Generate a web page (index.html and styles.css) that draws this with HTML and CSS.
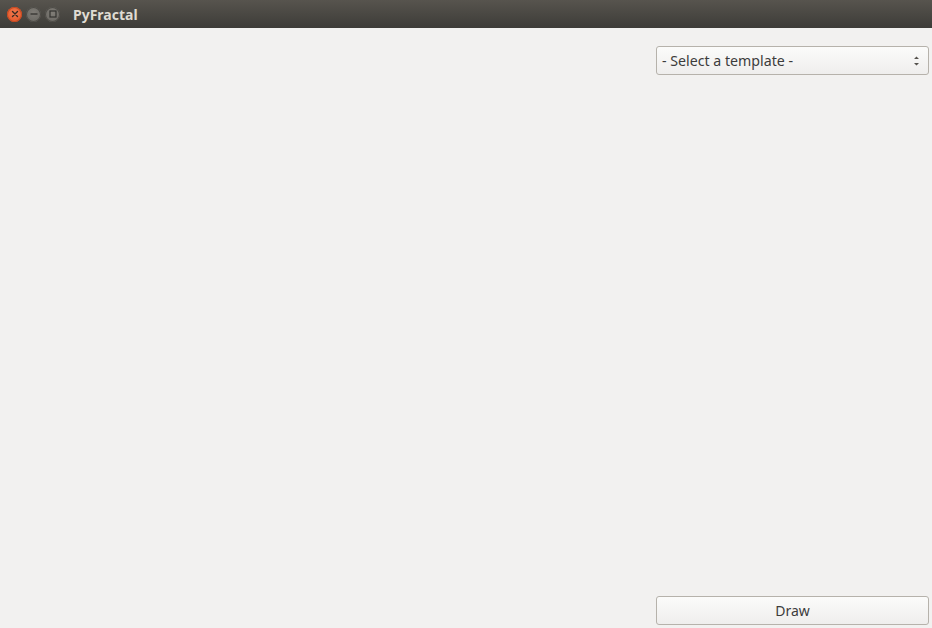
FILE: index.html
```html
<!DOCTYPE html>
<html>
<head>
<meta charset="utf-8">
<link rel="stylesheet" href="styles.css">
</head>
<body>
<div class="window">
  <div class="titlebar">
    <div class="controls">
      <span class="wbtn close">
        <svg width="8" height="8" viewBox="0 0 8 8"><path d="M1.5 1.5 L6.5 6.5 M6.5 1.5 L1.5 6.5" stroke="#3a2a22" stroke-width="1.4" stroke-linecap="round"/></svg>
      </span>
      <span class="wbtn">
        <svg width="8" height="8" viewBox="0 0 8 8"><path d="M0.5 4 H7.5" stroke="#33322f" stroke-width="1.3"/></svg>
      </span>
      <span class="wbtn">
        <svg width="8" height="8" viewBox="0 0 8 8"><rect x="1" y="1" width="6" height="6" fill="none" stroke="#33322f" stroke-width="1.2"/></svg>
      </span>
    </div>
    <div class="title">PyFractal</div>
  </div>
  <div class="content">
    <div class="canvas"></div>
    <div class="side">
      <div class="combo">
        <span class="combo-text">- Select a template -</span>
        <svg class="arrows" width="7" height="14" viewBox="0 0 7 14"><path d="M1 5 L3.5 2.5 L6 5 Z M1 9 L3.5 11.5 L6 9 Z" fill="#55524d"/></svg>
      </div>
      <div class="spacer"></div>
      <button class="btn">Draw</button>
    </div>
  </div>
</div>
</body>
</html>
```

FILE: styles.css
```css
html, body {
  margin: 0;
  padding: 0;
  background: #f2f1f0;
  font-family: "Noto Sans", "DejaVu Sans", sans-serif;
}
.window {
  width: 932px;
  height: 628px;
  display: flex;
  flex-direction: column;
}
.titlebar {
  height: 28px;
  flex: none;
  background: linear-gradient(#57544e, #3d3c38);
  display: flex;
  align-items: center;
}
.controls {
  display: flex;
  gap: 4px;
  padding-left: 7px;
}
.wbtn {
  flex: none;
  width: 15px;
  height: 15px;
  border-radius: 50%;
  background: radial-gradient(circle at 50% 40%, #807d77, #64625d);
  box-shadow: inset 0 0 0 1px #4d4b46;
  display: flex;
  align-items: center;
  justify-content: center;
}
.wbtn.close {
  background: radial-gradient(circle at 50% 40%, #f47a4e, #df4f22);
  box-shadow: inset 0 0 0 1px #c44a22;
}
.title {
  margin-left: 13px;
  color: #dfdbd2;
  font-weight: bold;
  font-size: 14px;
}
.content {
  flex: 1;
  display: flex;
}
.canvas {
  flex: 1;
}
.side {
  width: 273px;
  margin-right: 3px;
  padding-top: 18px;
  padding-bottom: 3px;
  display: flex;
  flex-direction: column;
}
.combo {
  height: 29px;
  box-sizing: border-box;
  border: 1px solid #b6b2ab;
  border-radius: 3px;
  background: linear-gradient(#fbfbfa, #efeeed);
  display: flex;
  align-items: center;
  padding: 0 8px 0 5px;
  color: #3c3c3c;
  font-size: 14.2px;
}
.combo-text {
  flex: 1;
}
.spacer {
  flex: 1;
}
.btn {
  height: 29px;
  box-sizing: border-box;
  border: 1px solid #b6b2ab;
  border-radius: 3px;
  background: linear-gradient(#fbfbfa, #efeeed);
  color: #3c3c3c;
  font-family: "Noto Sans", "DejaVu Sans", sans-serif;
  font-size: 14px;
  padding: 0;
}
```
